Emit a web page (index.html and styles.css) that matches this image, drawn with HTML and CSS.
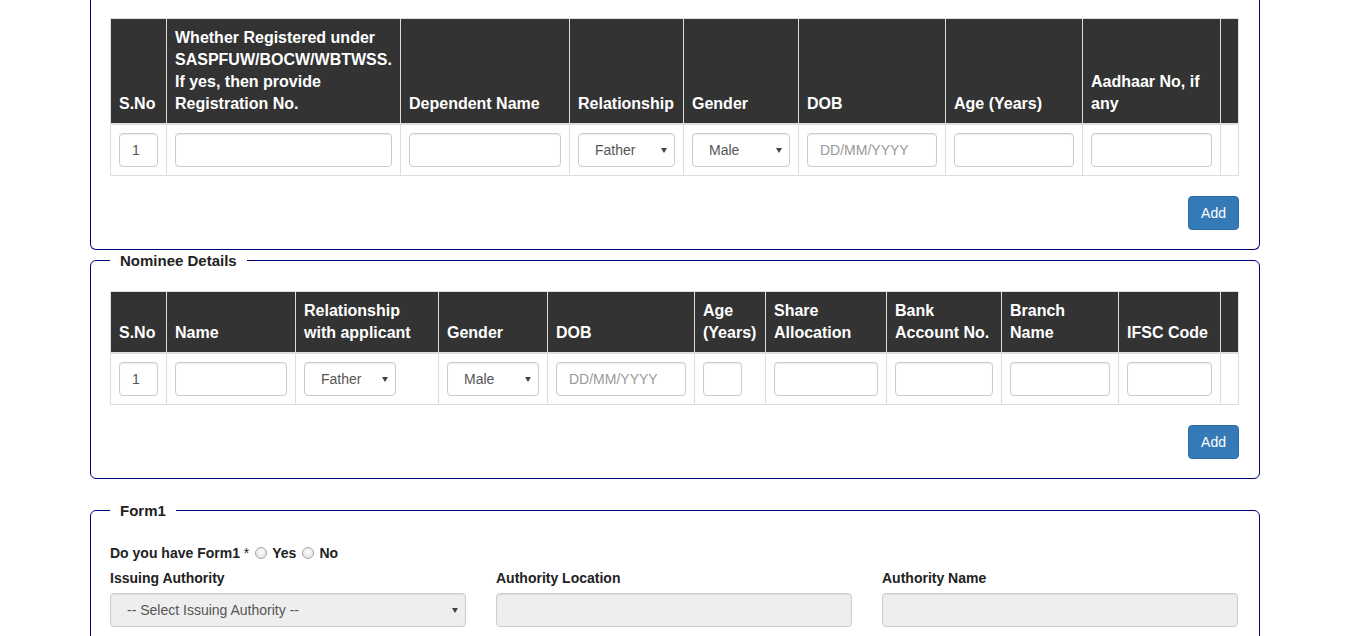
FILE: index.html
```html
<!DOCTYPE html>
<html lang="en">
<head>
<meta charset="utf-8">
<title>Dependent and Nominee Details</title>
<link rel="stylesheet" href="styles.css">
</head>
<body>
<div class="container">

  <fieldset class="box box-cut">
    <table class="grid dep">
      <thead>
        <tr>
          <th>S.No</th>
          <th>Whether Registered under<br>SASPFUW/BOCW/WBTWSS.<br>If yes, then provide<br>Registration No.</th>
          <th>Dependent Name</th>
          <th>Relationship</th>
          <th>Gender</th>
          <th>DOB</th>
          <th>Age (Years)</th>
          <th>Aadhaar No, if<br>any</th>
          <th></th>
        </tr>
      </thead>
      <tbody>
        <tr>
          <td><input class="fc w39" type="text" value="1"></td>
          <td><input class="fc" type="text"></td>
          <td><input class="fc" type="text"></td>
          <td><span class="sel"><select class="fc"><option>Father</option></select></span></td>
          <td><span class="sel"><select class="fc"><option>Male</option></select></span></td>
          <td><input class="fc" type="text" placeholder="DD/MM/YYYY"></td>
          <td><input class="fc" type="text"></td>
          <td><input class="fc" type="text"></td>
          <td></td>
        </tr>
      </tbody>
    </table>
    <div class="actions"><button class="btn" type="button">Add</button></div>
  </fieldset>

  <fieldset class="box">
    <legend>Nominee Details</legend>
    <table class="grid nom">
      <thead>
        <tr>
          <th>S.No</th>
          <th>Name</th>
          <th>Relationship<br>with applicant</th>
          <th>Gender</th>
          <th>DOB</th>
          <th>Age<br>(Years)</th>
          <th>Share<br>Allocation</th>
          <th>Bank<br>Account No.</th>
          <th>Branch<br>Name</th>
          <th>IFSC Code</th>
          <th></th>
        </tr>
      </thead>
      <tbody>
        <tr>
          <td><input class="fc w39" type="text" value="1"></td>
          <td><input class="fc" type="text"></td>
          <td><span class="sel w92"><select class="fc"><option>Father</option></select></span></td>
          <td><span class="sel"><select class="fc"><option>Male</option></select></span></td>
          <td><input class="fc" type="text" placeholder="DD/MM/YYYY"></td>
          <td><input class="fc w39" type="text"></td>
          <td><input class="fc" type="text"></td>
          <td><input class="fc" type="text"></td>
          <td><input class="fc" type="text"></td>
          <td><input class="fc" type="text"></td>
          <td></td>
        </tr>
      </tbody>
    </table>
    <div class="actions"><button class="btn" type="button">Add</button></div>
  </fieldset>

  <fieldset class="box box-gap">
    <legend>Form1</legend>
    <div class="q">Do you have Form1 <span class="req">*</span><input class="rad" type="radio" name="form1"><span>Yes</span><input class="rad" type="radio" name="form1"><span>No</span></div>
    <div class="row">
      <div class="col">
        <label class="lbl">Issuing Authority</label>
        <span class="sel"><select class="fc" disabled><option>-- Select Issuing Authority --</option></select></span>
      </div>
      <div class="col">
        <label class="lbl">Authority Location</label>
        <input class="fc" type="text" disabled>
      </div>
      <div class="col">
        <label class="lbl">Authority Name</label>
        <input class="fc" type="text" disabled>
      </div>
    </div>
  </fieldset>

</div>
</body>
</html>
```

FILE: styles.css
```css
* {
  box-sizing: border-box;
}

html,
body {
  overflow: hidden;
}

body {
  margin: 0;
  font-family: "Liberation Sans", Arial, Helvetica, sans-serif;
  font-size: 14px;
  line-height: 20px;
  color: #333;
  background: #fff;
}

.container {
  width: 1170px;
  margin-left: 90px;
}

/* Fieldset panels */
.box {
  margin: 0;
  min-width: 0;
  padding: 0 21px 19px 19px;
  border: 1px solid #000080;
  border-radius: 6px;
}

.box-cut {
  border-top: 0;
  border-top-left-radius: 0;
  border-top-right-radius: 0;
  padding-top: 18px;
}

.box-gap {
  margin-top: 21px;
}

.box legend {
  margin: 0;
  padding: 0 10px;
  font-size: 15px;
  line-height: 21px;
  font-weight: bold;
  color: #222;
}

/* Tables */
.grid {
  width: 100%;
  border-collapse: collapse;
  table-layout: fixed;
  margin: 0 0 20px;
}

.box legend + .grid {
  margin-top: 20px;
}

.grid th,
.grid td {
  border: 1px solid #ddd;
  padding: 8px;
}

.grid th {
  background: #333;
  color: #fff;
  font-size: 16px;
  line-height: 22px;
  font-weight: bold;
  text-align: left;
  vertical-align: bottom;
  white-space: nowrap;
  border-bottom-width: 2px;
}

.grid td {
  vertical-align: top;
}

.dep th:nth-child(1) { width: 56px; }
.dep th:nth-child(2) { width: 234px; }
.dep th:nth-child(3) { width: 169px; }
.dep th:nth-child(4) { width: 114px; }
.dep th:nth-child(5) { width: 115px; }
.dep th:nth-child(6) { width: 147px; }
.dep th:nth-child(7) { width: 137px; }
.dep th:nth-child(8) { width: 138px; }
.dep th:nth-child(9) { width: 18px; }

.nom th:nth-child(1) { width: 56px; }
.nom th:nth-child(2) { width: 129px; }
.nom th:nth-child(3) { width: 143px; }
.nom th:nth-child(4) { width: 109px; }
.nom th:nth-child(5) { width: 147px; }
.nom th:nth-child(6) { width: 71px; }
.nom th:nth-child(7) { width: 121px; }
.nom th:nth-child(8) { width: 115px; }
.nom th:nth-child(9) { width: 117px; }
.nom th:nth-child(10) { width: 102px; }
.nom th:nth-child(11) { width: 18px; }

/* Form controls */
.fc {
  display: block;
  width: 100%;
  height: 34px;
  margin: 0;
  padding: 6px 12px;
  font-family: "Liberation Sans", Arial, Helvetica, sans-serif;
  font-size: 14px;
  line-height: 20px;
  color: #555;
  background: #fff;
  border: 1px solid #ccc;
  border-radius: 4px;
  box-shadow: inset 0 1px 1px rgba(0, 0, 0, 0.075);
}

.fc::placeholder {
  color: #999;
  opacity: 1;
}

.fc:disabled {
  background: #eee;
  color: #555;
  opacity: 1;
}

.w39 {
  width: 39px;
}

.sel {
  position: relative;
  display: block;
}

.sel.w92 {
  width: 92px;
}

.sel .fc {
  -webkit-appearance: none;
  appearance: none;
  padding-left: 16px;
  padding-right: 20px;
}

.sel::after {
  content: "";
  position: absolute;
  right: 8px;
  top: 15px;
  border-left: 3px solid transparent;
  border-right: 3px solid transparent;
  border-top: 5px solid #444;
  pointer-events: none;
}

/* Buttons */
.actions {
  display: flex;
  justify-content: flex-end;
}

.btn {
  margin: 0 -1px 0 0;
  padding: 6px 12px;
  font-family: "Liberation Sans", Arial, Helvetica, sans-serif;
  font-size: 14px;
  line-height: 20px;
  color: #fff;
  background: #337ab7;
  border: 1px solid #2e6da4;
  border-radius: 4px;
}

/* Form1 section */
.q {
  margin: 22px 0 5px;
  font-weight: bold;
  line-height: 20px;
  color: #222;
}

.req {
  font-weight: normal;
}

.rad {
  -webkit-appearance: none;
  appearance: none;
  width: 12px;
  height: 12px;
  margin: 0 5px 0 6px;
  vertical-align: -1px;
  border: 1px solid #a6a6a6;
  border-radius: 50%;
  background: radial-gradient(circle at 50% 40%, #fdfdfd 0, #e4e4e4 75%);
}

.row {
  display: grid;
  grid-template-columns: repeat(3, 1fr);
  column-gap: 30px;
}

.lbl {
  display: block;
  margin-bottom: 5px;
  font-weight: bold;
  color: #222;
}
```
